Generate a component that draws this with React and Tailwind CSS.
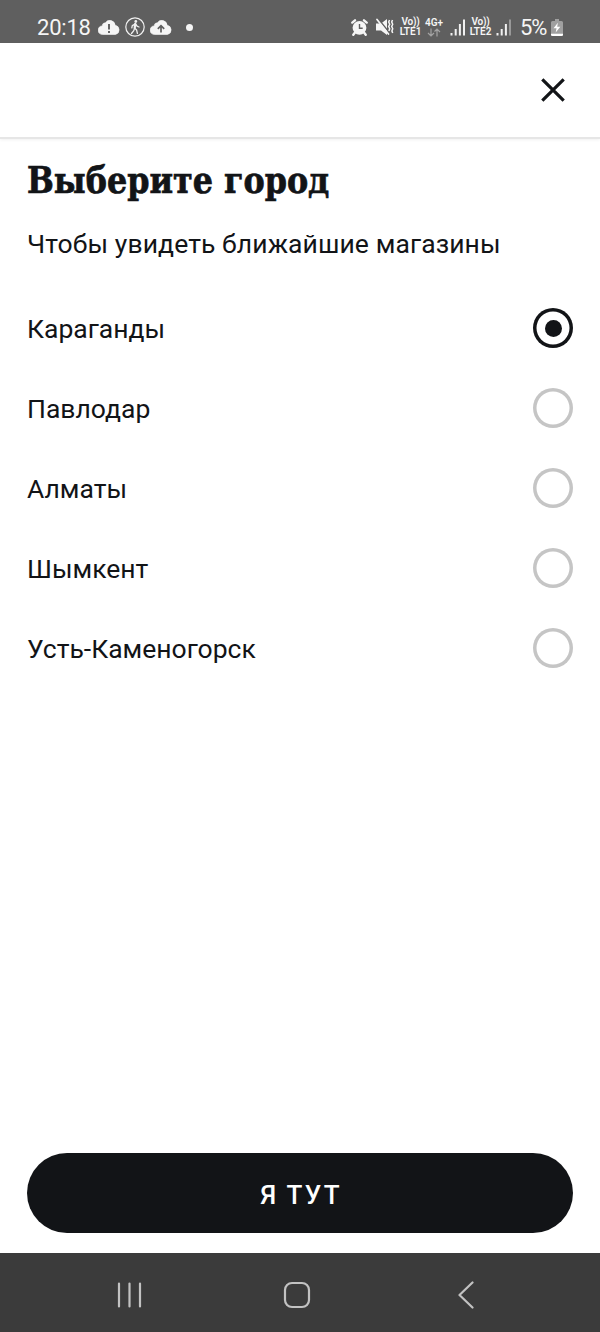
import { useState } from 'react'

const cities = ['Караганды', 'Павлодар', 'Алматы', 'Шымкент', 'Усть-Каменогорск']

function CloudIcon({ children }) {
  return (
    <svg width="22" height="16" viewBox="0 0 22 16" className="shrink-0">
      <path d="M4.500 15.500a4.300 4.300 0 0 1-.3-8.600 3.400 3.400 0 0 1 3.200-3.200A5.400 5.400 0 0 1 17.200 6.300a4.700 4.700 0 0 1 .3 9.200z" fill="#f5f5f5" stroke="#f5f5f5" strokeWidth="0.600" />
      {children}
    </svg>
  )
}

function WalkIcon() {
  return (
    <svg width="20" height="20" viewBox="0 0 20 20" fill="none" stroke="#f0f0f0" className="shrink-0">
      <circle cx="10" cy="10" r="9.200" strokeWidth="1.200" />
      <circle cx="10.800" cy="4.500" r="1.400" fill="#f0f0f0" stroke="none" />
      <path d="M10.300 6.700 9.600 11l2 2 .8 3.400M9.600 11l-.8 2.600-2.300 2.900M10 7.200 7.300 8.600l-.5 2.300M10.800 7.200l1.200 2 2 .8" strokeWidth="1.300" strokeLinecap="round" strokeLinejoin="round" />
      <path d="m10.200 6.800-.5 4.100" strokeWidth="2.200" strokeLinecap="round" />
    </svg>
  )
}

function AlarmIcon() {
  return (
    <svg width="17" height="17" viewBox="0 0 17 17" fill="none" stroke="#f5f5f5" className="shrink-0">
      <circle cx="8.500" cy="8.800" r="6.900" fill="#f5f5f5" stroke="none" />
      <path d="M1.300 3.600 4 1.300M15.700 3.600 13 1.300M3.800 13.800l-1.500 1.900M13.200 13.800l1.500 1.900" strokeWidth="2.400" strokeLinecap="round" />
      <path d="M8.500 5v4.300h3.200" stroke="#5f5f5f" strokeWidth="1.400" />
    </svg>
  )
}

function MuteIcon() {
  return (
    <svg width="18" height="18" viewBox="0 0 18 18" fill="none" stroke="#f5f5f5" className="shrink-0">
      <path d="M0 5.500h5l6-4.500v16l-6-4.500H0z" fill="#f5f5f5" stroke="none" />
      <path d="M2.200.8 13 14.300" stroke="#5f5f5f" strokeWidth="1.500" />
      <path d="M1 1.500 12.500 16" strokeWidth="1.700" strokeLinecap="round" />
      <path d="m13.500 2-.8 2 1 2.200-1 2.300 1 2.300-.8 2.200M16.500 2l-.8 2 1 2.200-1 2.300 1 2.300-.8 2.200.8 2" strokeWidth="1.500" />
    </svg>
  )
}

function VolteLabel({ sim }) {
  return (
    <div className="flex w-[23px] shrink-0 flex-col items-center text-[10px] leading-[10px] font-semibold">
      <span className="tracking-[-0.200px]">Vo))</span>
      <span>LTE{sim}</span>
    </div>
  )
}

function SignalBars({ dimLast }) {
  return (
    <svg width="16" height="17" viewBox="0 0 16 17" fill="#f0f0f0" className="shrink-0">
      <rect x="0.500" y="14" width="2" height="2.500" />
      <rect x="4.700" y="10" width="2" height="6.500" />
      <rect x="8.900" y="5" width="2" height="11.500" />
      <rect x="13" y="0.500" width="2" height="16" opacity={dimLast ? 0.4 : 1} />
    </svg>
  )
}

function BatteryIcon() {
  return (
    <svg width="12" height="17" viewBox="0 0 12 17" className="shrink-0">
      <path d="M4 0h4v2h2.500A1.500 1.500 0 0 1 12 3.500v12a1.500 1.500 0 0 1-1.500 1.500h-9A1.500 1.500 0 0 1 0 15.500v-12A1.500 1.500 0 0 1 1.500 2H4z" fill="#a0a0a0" />
      <path d="M0 14.800h12v.7a1.500 1.500 0 0 1-1.500 1.500h-9A1.500 1.500 0 0 1 0 15.500z" fill="#fff" />
      <path d="M6.900 3.800 2.500 9.300h3l-.8 4.200 4.600-5.700H6.200z" fill="#fff" />
    </svg>
  )
}

function StatusBar() {
  return (
    <header className="flex h-[43px] shrink-0 items-center bg-[#5f5f5f] pt-[11px] pr-[37px] pl-[37px] text-[#f5f5f5]">
      <span className="w-[61px] pt-px text-[22px] leading-none tracking-[-0.200px]">20:18</span>
      <CloudIcon>
        <path d="M11 5v5.500M11 12v2" stroke="#5f5f5f" strokeWidth="1.900" />
      </CloudIcon>
      <div className="ml-[5px] flex">
        <WalkIcon />
      </div>
      <div className="ml-[5px] flex">
        <CloudIcon>
          <path d="M11 13.500V7M7.800 9.800 11 6.600l3.200 3.200" stroke="#5f5f5f" strokeWidth="1.700" fill="none" />
        </CloudIcon>
      </div>
      <span className="ml-[14px] size-[7px] rounded-full bg-[#f5f5f5]" />
      <div className="ml-auto flex items-center">
        <AlarmIcon />
        <div className="ml-2 flex">
          <MuteIcon />
        </div>
        <div className="ml-[5px] flex">
          <VolteLabel sim="1" />
        </div>
        <div className="ml-[2px] flex w-[20px] flex-col items-center text-[10px] leading-[10px] font-semibold">
          <span>4G+</span>
          <svg width="14" height="9" viewBox="0 0 14 9" fill="none" stroke="#a3a3a3" strokeWidth="1.200">
            <path d="M4 .5v7.500M1 5l3 3 3-3M10 8.500V1M7.500 3.500 10 1l3 3" />
          </svg>
        </div>
        <div className="ml-[6px] flex">
          <SignalBars />
        </div>
        <div className="ml-[3px] flex">
          <VolteLabel sim="2" />
        </div>
        <div className="ml-[4px] flex">
          <SignalBars dimLast />
        </div>
        <span className="ml-[8px] w-[31px] pt-px text-[22px] leading-none tracking-[-1px]">5%</span>
        <BatteryIcon />
      </div>
    </header>
  )
}

function CityRow({ name, selected, onSelect }) {
  return (
    <button
      type="button"
      role="radio"
      aria-checked={selected}
      onClick={onSelect}
      className="flex h-20 w-full items-center justify-between text-left"
    >
      <span className="pt-px text-[26.500px] leading-8">{name}</span>
      <span
        className={`flex size-10 items-center justify-center rounded-full ${selected ? 'shadow-[inset_0_0_0_3.500px_#121417]' : 'shadow-[inset_0_0_0_3.500px_#c5c5c5]'}`}
      >
        {selected && <span className="size-[17px] rounded-full bg-[#121417]" />}
      </span>
    </button>
  )
}

function NavigationBar() {
  return (
    <nav className="flex h-[79px] shrink-0 items-center bg-[#3b3b3b] pt-[5px] pl-[116px]">
      <svg width="27" height="28" viewBox="0 0 27 28" fill="none" stroke="#c2c2c2" strokeWidth="2.200" strokeLinecap="round">
        <path d="M3 2.500v23M13.500 2.500v23M24 2.500v23" />
      </svg>
      <svg width="28" height="28" viewBox="0 0 28 28" fill="none" stroke="#c2c2c2" strokeWidth="2.200" className="ml-[140px]">
        <rect x="2" y="2" width="24" height="24" rx="7" />
      </svg>
      <svg width="18" height="28" viewBox="0 0 18 28" fill="none" stroke="#c2c2c2" strokeWidth="2.200" strokeLinecap="round" strokeLinejoin="round" className="ml-[146px]">
        <path d="M15.500 1.500 2.500 14l13 12.500" />
      </svg>
    </nav>
  )
}

export default function App() {
  const [city, setCity] = useState(cities[0])

  return (
    <div className="flex h-screen flex-col bg-white font-['Roboto',sans-serif] text-[#121417]">
      <StatusBar />
      <div className="flex h-24 shrink-0 items-center justify-end border-b-2 border-[#e6e6e6] pr-[34px] shadow-[0_1px_3px_rgba(0,0,0,0.06)]">
        <button type="button" aria-label="Закрыть">
          <svg width="26" height="26" viewBox="0 0 26 26" fill="none" stroke="#121417" strokeWidth="3.200">
            <path d="m2.300 2.300 21.400 21.400M23.700 2.300 2.300 23.700" />
          </svg>
        </button>
      </div>
      <main className="flex flex-1 flex-col px-[27px] pt-[17px]">
        <h1 className="origin-left scale-x-[0.930] font-['Roboto_Slab','DejaVu_Serif_Condensed','DejaVu_Serif',serif] text-[38px] leading-[48px] font-bold whitespace-nowrap [-webkit-text-stroke:0.700px_#121417]">
          Выберите город
        </h1>
        <p className="mt-6 text-[26.500px] leading-8 tracking-[0.090px]">Чтобы увидеть ближайшие магазины</p>
        <div role="radiogroup" className="mt-[28px]">
          {cities.map(name => (
            <CityRow key={name} name={name} selected={name === city} onSelect={() => setCity(name)} />
          ))}
        </div>
        <button
          type="button"
          className="mt-auto mb-5 flex h-20 items-center justify-center rounded-full bg-[#121417] pt-[4px] pl-[2px] text-[26px] font-medium tracking-[2.300px] text-white"
        >
          Я ТУТ
        </button>
      </main>
      <NavigationBar />
    </div>
  )
}
